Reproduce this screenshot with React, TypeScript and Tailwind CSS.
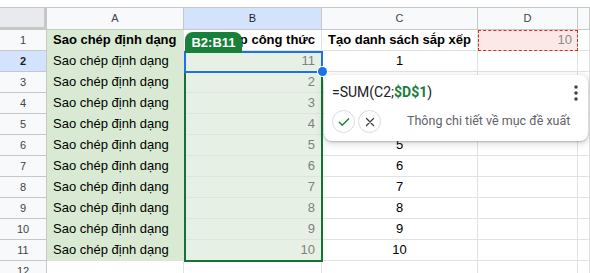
import React from "react";

const rowsA = Array.from({ length: 10 }, () => "Sao chép định dạng");
const bVals = ["11", "2", "3", "4", "5", "6", "7", "8", "9", "10"];

export default function App() {
  const grid = "border-r border-b border-[#e2e2e2]";
  const hdr = "border-r border-b border-[#c7c7c7] bg-[#f8f9fa]";
  return (
    <div className="relative w-[590px] h-[273px] overflow-hidden bg-white font-['Liberation_Sans',Arial,sans-serif] text-[13px] text-[#000]">
      <div className="h-[8px] border-b border-[#c7c7c7] bg-white" />
      <div className="grid grid-cols-[47px_137px_138px_156px_100px_1fr]">
        {/* header */}
        <div className="h-[22px] border-r-[3px] border-b-[3px] border-[#c7c7c7] bg-[#e8eaed]" />
        <div className={`${hdr} h-[22px] flex items-center justify-center text-[11px] text-[#444]`}>A</div>
        <div className={`h-[22px] border-r border-b border-[#c7c7c7] bg-[#d3e3fd] flex items-center justify-center text-[11px] text-[#1f1f1f]`}>B</div>
        <div className={`${hdr} h-[22px] flex items-center justify-center text-[11px] text-[#444]`}>C</div>
        <div className={`${hdr} h-[22px] flex items-center justify-center text-[11px] text-[#444]`}>D</div>
        <div className={`${hdr} h-[22px]`} />

        {/* row 1 */}
        <div className="h-[21px] border-r border-b border-[#c7c7c7] bg-[#f8f9fa] flex items-center justify-center text-[11px] text-[#444]">1</div>
        <div className={`${grid} h-[21px] bg-[#d9ead3] flex items-center pl-[6px] font-bold whitespace-nowrap`}>Sao chép định dạng</div>
        <div className={`${grid} h-[21px] flex items-center justify-center font-bold whitespace-nowrap`}>Sao chép công thức</div>
        <div className={`${grid} h-[21px] flex items-center justify-center font-bold whitespace-nowrap`}>Tạo danh sách sắp xếp</div>
        <div className={`${grid} h-[21px] bg-[#fce8e6] flex items-center justify-end pr-[5px] text-[#8a8a8a] outline outline-1 outline-dashed outline-[#d93025] -outline-offset-1`}>10</div>
        <div className={`${grid} h-[21px]`} />

        {rowsA.map((a, i) => {
          const r = i + 2;
          const active = r === 2;
          return (
            <React.Fragment key={r}>
              <div
                className={`h-[21px] border-r border-b border-[#c7c7c7] flex items-center justify-center text-[11px] ${
                  active ? "bg-[#d3e3fd] font-bold text-[#1f1f1f]" : "bg-[#f8f9fa] text-[#444]"
                }`}
              >
                {r}
              </div>
              <div className={`${grid} h-[21px] bg-[#d9ead3] flex items-center pl-[6px] whitespace-nowrap`}>{a}</div>
              <div className={`${grid} h-[21px] bg-[#e7f0e4] flex items-center justify-end pr-[6px] text-[#808080]`}>{bVals[i]}</div>
              <div className={`${grid} h-[21px] flex items-center justify-center`}>{r - 1}</div>
              <div className={`${grid} h-[21px]`} />
              <div className={`${grid} h-[21px]`} />
            </React.Fragment>
          );
        })}

        {/* row 12 */}
        <div className="h-[21px] border-r border-b border-[#c7c7c7] bg-[#f8f9fa] flex items-center justify-center text-[11px] text-[#444]">12</div>
        <div className={`${grid} h-[21px]`} />
        <div className={`${grid} h-[21px]`} />
        <div className={`${grid} h-[21px]`} />
        <div className={`${grid} h-[21px]`} />
        <div className={`${grid} h-[21px]`} />
      </div>

      {/* range border */}
      <div className="absolute left-[184px] top-[51px] w-[139px] h-[211px] border-2 border-[#137333]" />
      {/* active cell */}
      <div className="absolute left-[184px] top-[51px] w-[139px] h-[22px] border-2 border-[#1a73e8]" />
      <div className="absolute left-[318px] top-[67px] w-[9px] h-[9px] rounded-full bg-[#1a73e8] ring-1 ring-white" />

      {/* range chip */}
      <div className="absolute left-[185px] top-[32px] w-[57px] h-[21px] rounded-t-[8px] bg-[#188038] text-white font-bold text-[13px] flex items-center justify-center">
        B2:B11
      </div>

      {/* popup */}
      <div className="absolute left-[324px] top-[75px] w-[264px] h-[66px] rounded-[8px] bg-white shadow-[0_1px_2px_rgba(60,64,67,0.3),0_2px_6px_2px_rgba(60,64,67,0.15)] flex flex-col">
        <div className="h-[35px] flex items-center pl-[8px] pr-[10px] justify-between">
          <div className="text-[14px] text-[#202124] font-['Roboto','Liberation_Sans',sans-serif]">
            =SUM(C2;<span className="font-bold text-[#188038]">$D$1</span>)
          </div>
          <svg width="4" height="16" viewBox="0 0 4 16" className="mt-[1px]">
            <circle cx="2" cy="2" r="1.8" fill="#444" />
            <circle cx="2" cy="8" r="1.8" fill="#444" />
            <circle cx="2" cy="14" r="1.8" fill="#444" />
          </svg>
        </div>
        <div className="flex items-center pl-[8px] gap-[3px]">
          <div className="w-[23px] h-[23px] rounded-full border border-[#dadce0] flex items-center justify-center">
            <svg width="14" height="14" viewBox="0 0 24 24" fill="none">
              <path d="M4 12.5l5 5L20 6.5" stroke="#188038" strokeWidth="2.4" strokeLinecap="round" strokeLinejoin="round" />
            </svg>
          </div>
          <div className="w-[23px] h-[23px] rounded-full border border-[#dadce0] flex items-center justify-center">
            <svg width="12" height="12" viewBox="0 0 24 24" fill="none">
              <path d="M5 5l14 14M19 5L5 19" stroke="#3c4043" strokeWidth="2.6" strokeLinecap="round" />
            </svg>
          </div>
          <div className="ml-[23px] text-[12.5px] text-[#5f6368] font-['Roboto','Liberation_Sans',sans-serif] whitespace-nowrap">
            Thông chi tiết về mục đề xuất
          </div>
        </div>
      </div>
    </div>
  );
}
